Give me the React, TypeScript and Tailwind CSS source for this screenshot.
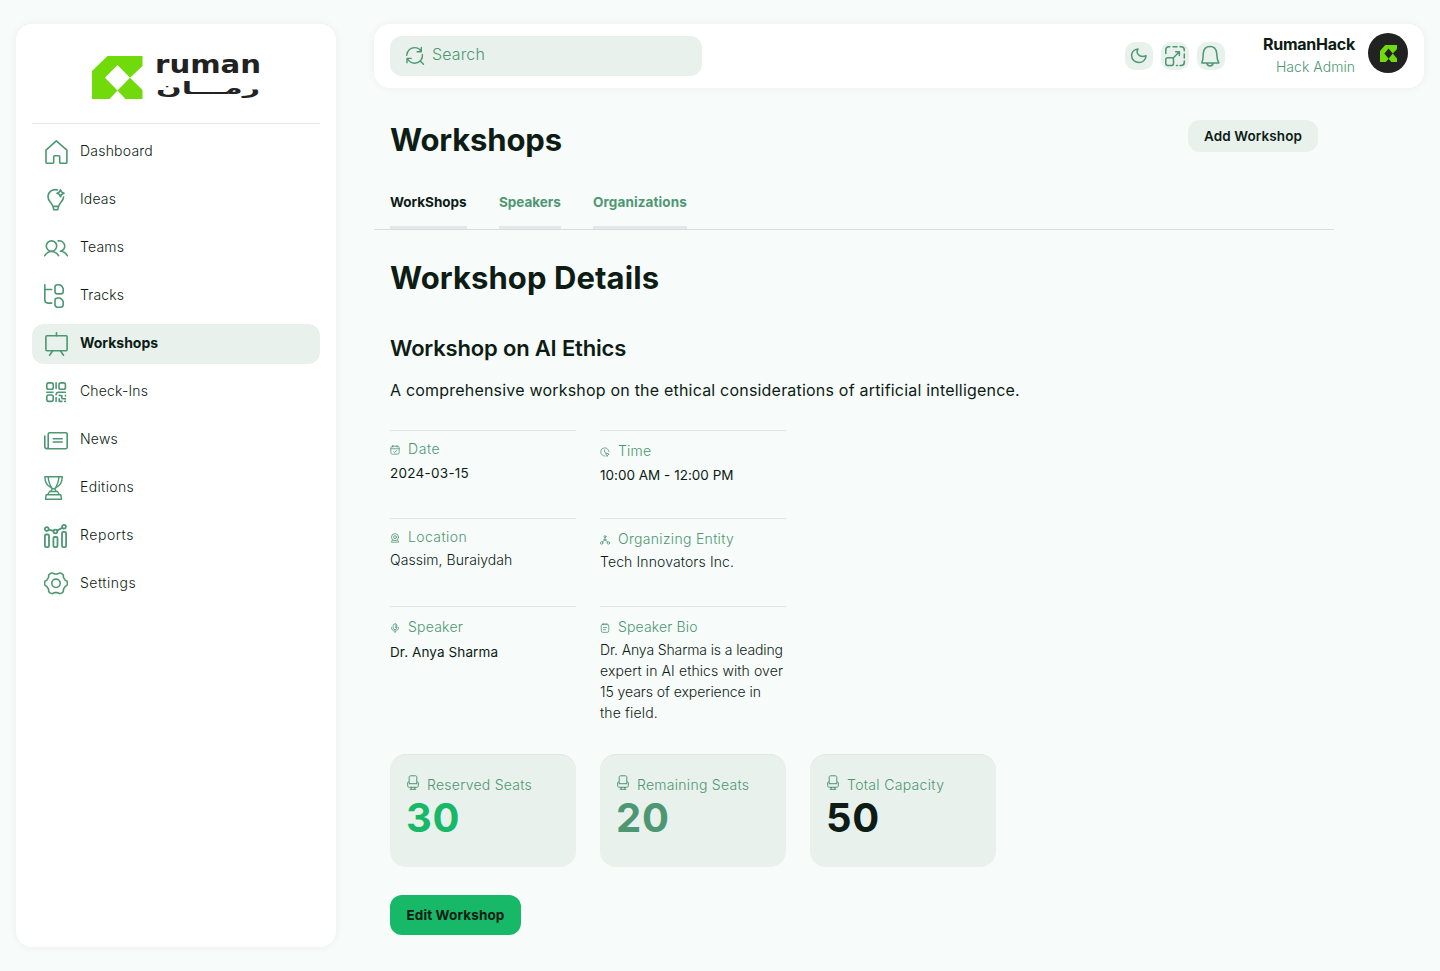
import React from "react";
import type { ReactNode } from "react";

const gearPath =
  Array.from({ length: 96 }, (_, i) => {
    const t = (i / 96) * Math.PI * 2;
    const r = 10.25 + 0.85 * Math.tanh(2.2 * Math.cos(6 * t)) + 0.1 * Math.cos(6 * t);
    return `${i === 0 ? "M" : "L"}${(12 + r * 1.02 * Math.cos(t)).toFixed(2)} ${(11.3 + r * Math.sin(t)).toFixed(2)}`;
  }).join("") + "Z";

function Icon({ children, className = "size-6", box = 24, stroke = 1.6 }: { children: ReactNode; className?: string; box?: number; stroke?: number }) {
  return (
    <svg
      viewBox={`0 0 ${box} ${box}`}
      className={`shrink-0 ${className}`}
      fill="none"
      stroke="#4e9773"
      strokeWidth={stroke}
      strokeLinecap="round"
      strokeLinejoin="round"
      aria-hidden="true"
    >
      {children}
    </svg>
  );
}

const navItems: { label: string; spacing: string; icon: ReactNode; active?: boolean }[] = [
  {
    label: "Dashboard",
    spacing: "tracking-[0.22px]",
    icon: <path d="M2 10.2 12.3.9l10.6 9.3v12.1a1 1 0 0 1-1 1h-5.2a1 1 0 0 1-1-1v-5.6a1 1 0 0 0-1-1h-4a1 1 0 0 0-1 1v5.6a1 1 0 0 1-1 1H3a1 1 0 0 1-1-1Z" />,
  },
  {
    label: "Ideas",
    spacing: "tracking-[0.17px]",
    icon: (
      <>
        <path d="M13.200 1.900C8.200.7 4 4.200 4 9c0 4.300 4 5.500 4.800 9.400h5.900c.6-3.700 4.500-5 4.900-9.300M9 18.400l.8 3.300h3.900l.8-3.300" />
        <path d="M16.500 1.700c.4 2.300 1.200 3.100 3.500 3.600-2.300.5-3.100 1.300-3.500 3.500-.4-2.200-1.200-3-3.500-3.500 2.300-.5 3.100-1.300 3.500-3.600Z" />
      </>
    ),
  },
  {
    label: "Teams",
    spacing: "tracking-[0.18px]",
    icon: (
      <>
        <circle cx="7.500" cy="10.100" r="5.200" />
        <path d="M.7 19.700c3.200-5.700 10.400-5.700 13.900 0M14.200 4.900a5.300 5.300 0 1 1 2.300 10.400M16.500 15.300c3 .2 5.300 1.700 6.800 4.400" />
      </>
    ),
  },
  {
    label: "Tracks",
    spacing: "tracking-[0.14px]",
    icon: <path d="M.8.8v15.300c0 2 1.200 3 3.200 3h3.700M.8 5.500h6.900M13.500.8h2.200c1.700.7 2.900 1.900 3.500 3.600v3c0 1.600-.9 2.500-2.500 2.500h-3.200c-1.600 0-2.500-.9-2.500-2.500V3.300c0-1.600.9-2.500 2.500-2.500ZM13.500 14h2.200c1.700.7 2.900 1.900 3.500 3.600v3c0 1.700-.9 2.600-2.500 2.600h-3.200c-1.600 0-2.500-.9-2.500-2.600v-4.100c0-1.600.9-2.500 2.500-2.500Z" />,
  },
  {
    label: "Workshops",
    spacing: "tracking-[-0.03px]",
    active: true,
    icon: (
      <>
        <rect x="1.900" y="3.700" width="21.200" height="15" rx="1" />
        <path d="M12.500.8v2.900M8.700 18.700l-3.100 4.500M16.400 18.700l3.100 4.500" />
      </>
    ),
  },
  {
    label: "Check-Ins",
    spacing: "tracking-[0.16px]",
    icon: (
      <>
        <rect x="2.800" y="2.900" width="6.400" height="6.400" rx="1.800" />
        <rect x="15" y="2.900" width="6.400" height="6.400" rx="1.800" />
        <rect x="2.800" y="15" width="6.400" height="6.400" rx="1.800" />
        <path d="M12.100 2.900v5.600M2.800 12.200h6.200M12.100 17.500v3.900M12.100 14.800c0-1.800.8-2.600 2.700-2.600h6.600M15.200 15.400l2.700.4v2.700l3.500.4M15.200 18.700v2.700h2.700M21.400 15.200v.8M21.400 21.400h-.7" />
      </>
    ),
  },
  {
    label: "News",
    spacing: "tracking-[0.22px]",
    icon: <path d="M4.200 6.200c0-1 .5-1.500 1.500-1.500h16c1 0 1.500.5 1.500 1.500v13c0 1-.5 1.500-1.500 1.500H3C1.500 20.700.8 20 .8 18.500V8M4.200 6.200v12.600c0 1.300-.5 1.900-1.500 1.900M9.200 10.700h9M9.200 14h9" />,
  },
  {
    label: "Editions",
    spacing: "tracking-[0.36px]",
    icon: <path d="M.8.8h17.500c-.2 6.200-2.400 9-6 10.600l-1.500 1.300 1.400 2.800H6.800l1.500-2.800-1.500-1.300C3.200 9.800 1 7 .8.8ZM4.200.8c.2 4.800 1.300 8 4.100 11.900h2.500c2.800-3.900 3.900-7.100 4.100-11.900M5.500 15.500h8l1.800 3.200M5.500 15.500l-1.800 3.200M2.200 18.700h14.600l.7 4.500H1.500Z" strokeWidth="1.400" />,
  },
  {
    label: "Reports",
    spacing: "tracking-[0.55px]",
    icon: (
      <g strokeWidth="1.800">
        <circle cx="2.800" cy="5.100" r="1.900" />
        <circle cx="11.400" cy="7.500" r="1.900" />
        <circle cx="20" cy="2.800" r="1.900" />
        <path d="m4.700 5.600 4.800 1.300M13.100 6.600l5.200-2.900" />
        <rect x=".9" y="10.500" width="4.100" height="12.600" rx="1.300" />
        <rect x="9.400" y="13" width="4.100" height="10.100" rx="1.300" />
        <rect x="18" y="7.900" width="4.100" height="15.200" rx="1.300" />
      </g>
    ),
  },
  {
    label: "Settings",
    spacing: "tracking-[0.5px]",
    icon: (
      <>
        <path d={gearPath} />
        <circle cx="12" cy="11.300" r="4.200" />
      </>
    ),
  },
];

function Mark({ className, hole }: { className: string; hole: string }) {
  return (
    <svg viewBox="0 0 50.5 43" preserveAspectRatio="none" className={className} aria-hidden="true">
      <path fill="#70da0a" d="M0 15 15.500 0H50.500V10L38 21.700 50.500 34V43H33.500L25.500 34.500 17.500 43H0Z" />
      <path fill={hole} d="M25.500 9 38 21.700 25.500 34.500 13 21.700Z" />
    </svg>
  );
}

function Logo() {
  return (
    <div className="flex h-[43px] w-[168px] items-start justify-between">
      <Mark className="h-[43px] w-[50.5px]" hole="#ffffff" />
      <svg viewBox="0 0 104 43" className="h-[43px] w-[104px] overflow-visible" fill="#222222" fontFamily="'DejaVu Sans', sans-serif" fontWeight="700">
        <text x="-1" y="17" fontSize="24" textLength="106" lengthAdjust="spacingAndGlyphs">ruman</text>
        <text x="0" y="38" fontSize="17" textLength="104" lengthAdjust="spacingAndGlyphs">رمـــان</text>
      </svg>
    </div>
  );
}

function Sidebar() {
  return (
    <aside className="flex h-[923px] w-80 shrink-0 flex-col rounded-2xl bg-white px-4 shadow-[0_0_8px_rgba(15,60,40,0.06)]">
      <div className="flex h-[100px] items-start justify-center border-b border-[#e5e7eb] pt-8">
        <Logo />
      </div>
      <nav className="mt-2 flex flex-col gap-2">
        {navItems.map((item) => (
          <a key={item.label} className={`flex h-10 items-center gap-3 rounded-xl px-3 ${item.active ? "bg-[#e8f1ec]" : ""}`}>
            <Icon>{item.icon}</Icon>
            <span className={`pb-0.5 text-sm ${item.spacing} ${item.active ? "font-bold" : "font-light"}`}>{item.label}</span>
          </a>
        ))}
      </nav>
    </aside>
  );
}

function IconButton({ children }: { children: ReactNode }) {
  return (
    <button className="flex size-7 items-center justify-center rounded-[10px] bg-[#e8f1ec]">
      <Icon className="size-7" box={28} stroke={1.5}>{children}</Icon>
    </button>
  );
}

function Header() {
  return (
    <header className="flex h-16 items-start justify-between rounded-2xl bg-white px-4 shadow-[0_0_8px_rgba(15,60,40,0.06)]">
      <div className="mt-3 flex h-10 w-[312px] items-center rounded-xl bg-[#e8f1ec] pl-[15px]">
        <Icon className="size-5" box={20} stroke={1.4}>
          <path d="M1.700 9.300C2.200 4.300 5.900 1.600 9.700 1.600c2.800 0 5 1.400 6.400 3.800M16.300 1.500v4.200h-4.200M17.400 8.500c.7 4.600-2.700 8.700-7.600 8.700-3.200 0-5.900-1.700-7.300-4.700M2 16.800v-4.400h4.200M15.200 15l3.300 3.300" />
        </Icon>
        <span className="ml-[7px] pb-1 text-base font-light tracking-[0.14px] text-[#4e9773]">Search</span>
      </div>
      <div className="flex">
        <div className="mt-[18px] flex gap-2">
          <IconButton>
            <path d="M13 7.100c-2.400 3.900.9 9.100 8.100 6.700-.6 4.100-3.500 6.800-7.100 6.800-4.200 0-7.400-3.100-7.400-7 0-3.500 2.700-6.200 6.400-6.500Z" />
          </IconButton>
          <IconButton>
            <path d="M4.800 11.500V8c0-2 1.200-3.200 3.200-3.200h.8M12 4.800h4M19 4.800h1.200c2 0 3.100 1.200 3.100 3.200v.8M23.300 12v4M23.300 19v1.200c0 2-1.100 3.200-3.100 3.200H19M15.500 23.400h1" />
            <rect x="4.800" y="15.800" width="7.700" height="7.600" rx="1.800" />
            <path d="m12.500 15.700 5.800-5.900M14.600 9.700h3.800v3.800" />
          </IconButton>
          <IconButton>
            <path d="M4.900 20.200c1.600-2.500 1-5.600 1.400-9.100.5-4 3.100-6.500 6.700-6.500s6.200 2.500 6.700 6.500c.4 3.500-.1 6.600 2 9.100.2.500.1.800-.5.800H5.500c-.6 0-.8-.3-.6-.8ZM9.800 21.200c.5 1.900 1.500 2.700 3.200 2.700s2.700-.8 3.200-2.700" />
          </IconButton>
        </div>
        <div className="ml-9 mt-2 flex w-[94px] flex-col items-end">
          <span className="h-6 text-base font-bold leading-6 tracking-[-0.24px]">RumanHack</span>
          <span className="h-[22px] text-sm font-light leading-[22px] tracking-[0.03px] text-[#4e9773]">Hack Admin</span>
        </div>
        <div className="ml-[13px] mt-[9px] flex size-10 items-center justify-center rounded-full bg-[#222222]">
          <Mark className="h-[17px] w-[17px]" hole="#222222" />
        </div>
      </div>
    </header>
  );
}

const tabs = [
  { label: "WorkShops", className: "w-[77px] text-[#0d1c14] tracking-[-0.01px]" },
  { label: "Speakers", className: "w-[62px] text-[#4e9773] tracking-[-0.02px]" },
  { label: "Organizations", className: "w-[94px] text-[#4e9773] tracking-[0.11px]" },
];

type Detail = {
  label: string;
  labelClass: string;
  icon: ReactNode;
  value: ReactNode;
  valueClass: string;
};

const details: Detail[] = [
  {
    label: "Date",
    labelClass: "mt-[7px] tracking-[0.6px]",
    value: "2024-03-15",
    valueClass: "mt-[4px] text-[13.5px] font-normal tracking-[0.26px]",
    icon: (
      <>
        <rect x="2" y="3" width="20" height="19" rx="4" />
        <path d="M2 9h20M7 1v4M17 1v4M9 16l2 2 5-5" />
      </>
    ),
  },
  {
    label: "Time",
    labelClass: "mt-[9px] tracking-[0.2px]",
    value: "10:00 AM - 12:00 PM",
    valueClass: "mt-[4px] text-[13.5px] font-normal tracking-[0.01px]",
    icon: (
      <>
        <path d="M21.500 11.500A9.800 9.800 0 1 0 12 21.800M11 7v5l2.500 2" />
        <path d="m14.500 14.500 7.500 2.800-3.200 1.500-1.500 3.200Z" />
      </>
    ),
  },
  {
    label: "Location",
    labelClass: "mt-[7px] tracking-[0.4px]",
    value: "Qassim, Buraiydah",
    valueClass: "mt-[2px] font-light tracking-[0.06px]",
    icon: (
      <>
        <circle cx="12" cy="10" r="8.500" />
        <circle cx="12" cy="10" r="3.500" />
        <path d="M6 17 3 22h18l-3-5" />
      </>
    ),
  },
  {
    label: "Organizing Entity",
    labelClass: "mt-[9px] tracking-[0.31px]",
    value: "Tech Innovators Inc.",
    valueClass: "mt-[2px] font-light tracking-[0.12px]",
    icon: (
      <>
        <circle cx="12" cy="4" r="2.500" />
        <circle cx="4" cy="19" r="3" />
        <circle cx="20" cy="19" r="3" />
        <path d="M12 6.500V12l-6.500 4.500M12 12l6.500 4.500M9 11h6" />
      </>
    ),
  },
  {
    label: "Speaker",
    labelClass: "mt-[9px] tracking-[0.22px]",
    value: "Dr. Anya Sharma",
    valueClass: "mt-[5px] text-[13.5px] font-normal tracking-[0.1px]",
    icon: (
      <>
        <rect x="7.500" y="2" width="9" height="14" rx="4.500" />
        <path d="M3.500 11c0 5 3.500 8.500 8.500 8.500s8.500-3.500 8.500-8.500M12 19.500V23M13 7h3M13 10.500h3" />
      </>
    ),
  },
  {
    label: "Speaker Bio",
    labelClass: "mt-[9px] tracking-[0.15px]",
    value: (
      <>
        <span className="block tracking-[-0.12px]">Dr. Anya Sharma is a leading</span>
        <span className="block tracking-[0.1px]">expert in AI ethics with over</span>
        <span className="block tracking-[-0.06px]">15 years of experience in</span>
        <span className="block tracking-[0.16px]">the field.</span>
      </>
    ),
    valueClass: "mt-[2px] font-light",
    icon: (
      <>
        <rect x="3" y="3" width="18" height="19.500" rx="4" />
        <path d="M7.500 1.500v3M12 1.500v3M16.500 1.500v3M8 11h8M8 16h5" />
      </>
    ),
  },
];

const stats = [
  { label: "Reserved Seats", value: "30", spacing: "tracking-[0.26px]", color: "text-[#17b867]" },
  { label: "Remaining Seats", value: "20", spacing: "tracking-[0.27px]", color: "text-[#4e9773]" },
  { label: "Total Capacity", value: "50", spacing: "tracking-[0.32px]", color: "text-[#0d1c14]" },
];

function SeatIcon() {
  return (
    <svg viewBox="0 0 12 15" className="ml-px mt-px h-[15px] w-3 shrink-0" fill="none" stroke="#4e9773" strokeWidth="1" strokeLinecap="round" strokeLinejoin="round" aria-hidden="true">
      <path d="M2.200 7V2.200C2.200 1.200 2.800.8 3.700.8h4.600c.9 0 1.500.4 1.500 1.400V7M2.400 8.700h7.200M2.400 8.700C2.400 6.500.7 6.300.7 7.800v3c0 1 .6 1.500 1.500 1.500h7.600c.9 0 1.500-.5 1.500-1.500v-3c0-1.500-1.700-1.300-1.700.9M4.200 12.300v2M7.800 12.300v2M3.200 14.300h5.600" />
    </svg>
  );
}

export default function App() {
  return (
    <div className="flex h-[971px] w-full gap-[38px] overflow-hidden bg-[#f7fbfa] py-6 pl-4 pr-4 font-['Inter',sans-serif] text-[#0d1c14]">
      <Sidebar />
      <div className="flex min-w-0 flex-1 flex-col">
        <Header />
        <main className="w-[960px]">
          <div className="flex items-start justify-between px-4 pt-8">
            <h1 className="h-10 text-[31px] font-bold leading-10 tracking-[-0.15px]">Workshops</h1>
            <button className="h-8 w-[130px] rounded-xl bg-[#e8f1ec] text-[13.5px] font-semibold tracking-[0.1px]">Add Workshop</button>
          </div>
          <div className="mt-[27px] flex h-[43px] gap-8 border-b border-[#d0e3d9] px-4">
            {tabs.map((tab) => (
              <button key={tab.label} className={`flex items-start whitespace-nowrap border-b-[3px] border-[#e5e7eb] pt-[5px] text-[13.5px] font-bold leading-5 ${tab.className}`}>
                {tab.label}
              </button>
            ))}
          </div>
          <section className="px-4">
            <h2 className="mt-7 h-10 text-[31px] font-bold leading-10 tracking-[0.08px]">Workshop Details</h2>
            <h3 className="mt-9 h-7 text-[22px] font-semibold leading-7 tracking-[-0.18px]">Workshop on AI Ethics</h3>
            <p className="mt-4 h-6 text-base leading-6 tracking-[0.2px]">
              A comprehensive workshop on the ethical considerations of artificial intelligence.
            </p>
            <div className="mt-7 grid w-[396px] grid-cols-[186px_186px] grid-rows-[88px_88px_148px] gap-x-6">
              {details.map((d) => (
                <div key={d.label} className="border-t border-[#e1e7e6]">
                  <div className={`flex h-[21px] items-center text-sm font-light leading-[21px] text-[#4e9773] ${d.labelClass}`}>
                    <Icon className="mr-2 mt-[3px] size-2.5" stroke={1.9}>{d.icon}</Icon>
                    {d.label}
                  </div>
                  <div className={`whitespace-nowrap text-sm leading-[21px] ${d.valueClass}`}>{d.value}</div>
                </div>
              ))}
            </div>
            <div className="flex gap-6">
              {stats.map((s) => (
                <div key={s.label} className="h-[113px] w-[186px] rounded-2xl border-t border-[#e1e7e6] bg-[#e8f1ec] pl-4 pt-[19px]">
                  <div className="flex h-[21px] items-start gap-2">
                    <SeatIcon />
                    <span className={`whitespace-nowrap text-sm font-light leading-[21px] ${s.spacing} text-[#4e9773]`}>{s.label}</span>
                  </div>
                  <div className={`mt-[3px] text-[40px] font-bold leading-[40px] tracking-[0.8px] ${s.color}`}>{s.value}</div>
                </div>
              ))}
            </div>
            <button className="mt-7 block h-10 w-[131px] rounded-xl bg-[#17b867] text-[13.5px] font-bold tracking-[0.11px]">Edit Workshop</button>
          </section>
        </main>
      </div>
    </div>
  );
}
